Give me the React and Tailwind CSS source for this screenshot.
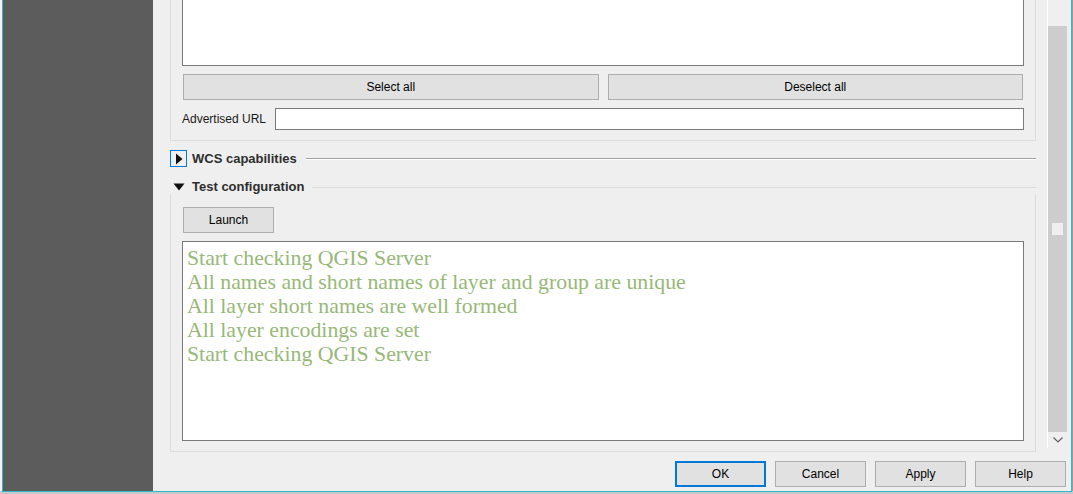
import React from "react";

const ui = { fontFamily: '"Liberation Sans", Arial, sans-serif' };
const serif = { fontFamily: '"Liberation Serif", "Times New Roman", serif' };

const logLines = [
  "Start checking QGIS Server",
  "All names and short names of layer and group are unique",
  "All layer short names are well formed",
  "All layer encodings are set",
  "Start checking QGIS Server",
];

const Btn = ({ children, className = "", focused = false }) => (
  <button
    className={`h-[26px] bg-[#e1e1e1] text-[12px] text-black flex items-center justify-center ${
      focused ? "border-2 border-[#0078d7]" : "border border-[#adadad]"
    } ${className}`}
  >
    {children}
  </button>
);

const App = () => {
  return (
    <div className="w-[1073px] h-[494px] overflow-hidden bg-[#c8c8c8] flex flex-col text-[12px]" style={ui}>
      <div className="h-[491px] flex">
        {/* sliver of the window behind */}
        <div className="w-[2px] bg-[#f3f3f3]" />
        <div className="w-px bg-[#33b6c6]" />

        {/* dialog side list */}
        <div className="w-[150px] bg-[#5c5c5c]" />

        {/* dialog main area */}
        <div className="w-[918px] bg-[#efefef] flex flex-col">
          <div className="h-[452px] flex">
            {/* scrolled content */}
            <div className="w-[894px] flex flex-col">
              {/* WMS/WFS group (cut off at top) */}
              <div className="ml-[17px] w-[866px] h-[141px] border-x border-b border-[#dcdcdc] px-[11px] flex flex-col">
                <div className="h-[66px] bg-white border-x border-b border-[#7a7a7a]" />
                <div className="mt-[8px] flex gap-[9px] px-px">
                  <Btn className="flex-1">Select all</Btn>
                  <Btn className="flex-1">Deselect all</Btn>
                </div>
                <div className="mt-[8px] flex items-center h-[22px]">
                  <span className="w-[93px] text-[#1a1a1a]">Advertised URL</span>
                  <div className="flex-1 h-[22px] bg-white border border-[#7a7a7a]" />
                </div>
              </div>

              {/* WCS capabilities collapsed */}
              <div className="mt-[9px] ml-[17px] w-[866px] h-[17px] flex items-center">
                <div className="w-[17px] h-[17px] border border-[#0078d7] flex items-center justify-center">
                  <svg width="8" height="12" viewBox="0 0 8 12">
                    <path d="M1 0.5 L7.5 6 L1 11.5 Z" fill="#111" />
                  </svg>
                </div>
                <span className="ml-[5px] font-bold text-[13px] text-[#2e2e2e]">WCS capabilities</span>
                <div className="ml-[9px] flex-1 border-t border-[#a0a0a0] border-b border-b-white" />
              </div>

              {/* Test configuration */}
              <div className="mt-[13px] ml-[17px] w-[866px] h-[14px] flex items-center">
                <svg className="ml-[3px]" width="12" height="8" viewBox="0 0 12 8">
                  <path d="M0.5 0.5 L11.5 0.5 L6 7.5 Z" fill="#111" />
                </svg>
                <span className="ml-[7px] font-bold text-[13px] text-[#2e2e2e]">Test configuration</span>
                <div className="ml-[8px] flex-1 border-t border-[#dcdcdc]" />
              </div>
              <div className="ml-[17px] w-[866px] flex-1 border-x border-b border-[#dcdcdc] px-[11px] pt-[13px] pb-[10px] flex flex-col">
                <Btn className="w-[91px] ml-px">Launch</Btn>
                <div className="mt-[8px] h-[200px] bg-white border border-[#7a7a7a] px-[4px] pt-[4px] text-[#98b878] text-[21.8px] leading-[24px]" style={serif}>
                  {logLines.map((l, i) => (
                    <div key={i}>{l}</div>
                  ))}
                </div>
              </div>
            </div>

            {/* scrollbar */}
            <div className="w-px bg-white h-[448px]" />
            <div className="w-[19px] h-[448px] flex flex-col">
              <div className="h-[26px]" />
              <div className="h-[406px] bg-[#cdcdcd] flex items-center justify-center">
                <div className="w-[11px] h-[12px] bg-[#efefef]" />
              </div>
              <div className="flex-1 flex items-center justify-center">
                <svg width="10" height="6" viewBox="0 0 10 6">
                  <path d="M0.5 0.5 L5 5 L9.5 0.5" stroke="#606060" strokeWidth="1.2" fill="none" />
                </svg>
              </div>
            </div>
          </div>

          {/* dialog buttons */}
          <div className="flex-1 flex justify-end items-start pt-[9px] pr-[5px] gap-[9px]">
            <Btn className="w-[91px]" focused>OK</Btn>
            <Btn className="w-[91px]">Cancel</Btn>
            <Btn className="w-[91px]">Apply</Btn>
            <Btn className="w-[91px]">Help</Btn>
          </div>
        </div>

        <div className="w-px bg-[#33b6c6]" />
        <div className="flex-1 bg-[#9a9a9a]" />
      </div>
      <div className="h-px ml-[2px] w-[1070px] bg-[#33b6c6]" />
      <div className="flex-1 bg-[#c8c8c8]" />
    </div>
  );
};

export default App;
